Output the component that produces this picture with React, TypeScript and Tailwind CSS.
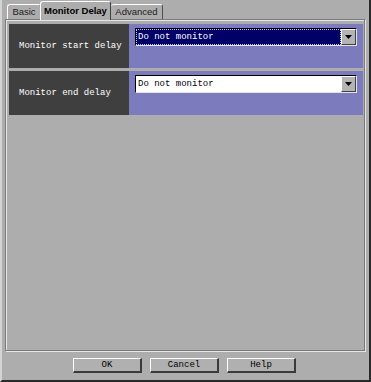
import React from "react";

const mono = { fontFamily: '"Liberation Mono", "DejaVu Sans Mono", monospace' };
const sans = { fontFamily: '"Liberation Sans", Arial, sans-serif' };

const Arrow = () => (
  <svg width="7" height="5" viewBox="0 0 7 5">
    <path d="M0 0 H7 L3.5 4 Z" fill="#000" />
  </svg>
);

const Select = ({ focused }: { focused?: boolean }) => {
  return (
    <div className="flex h-[18px] w-[222px] border-t border-l border-black border-b border-r border-b-[#e4e4e4] border-r-[#e4e4e4]">
      <div
        className={
          focused
            ? "flex flex-1 items-center bg-[#000066] text-white pl-[1px] border border-dotted border-[#c8c8ff]"
            : "flex flex-1 items-center bg-white text-black pl-[2px]"
        }
      >
        <span className="text-[9px] leading-none" style={mono}>
          Do not monitor
        </span>
      </div>
      <div className="flex w-[15px] items-center justify-center bg-[#b4b4b4] border-t border-l border-white border-b border-r border-b-[#404040] border-r-[#404040]">
        <Arrow />
      </div>
    </div>
  );
};

const Row = ({ label, focused }: { label: string; focused?: boolean }) => {
  return (
    <div className="flex h-[44px]">
      <div className="flex w-[120px] items-center bg-[#3f3f3f] pl-[10px] text-white">
        <span className="text-[9px] leading-none" style={mono}>
          {label}
        </span>
      </div>
      <div className="flex-1 bg-[#7b7bbd] pl-[6px] pt-[4px]">
        <Select focused={focused} />
      </div>
    </div>
  );
};

const Button = ({ children }: { children: React.ReactNode }) => (
  <div
    className="flex h-[15px] w-[69px] items-center justify-center bg-[#b0b0b0] border-t border-l border-white border-b-2 border-r-2 border-b-[#3a3a3a] border-r-[#3a3a3a] text-[9px] leading-none text-black"
    style={mono}
  >
    {children}
  </div>
);

export default function App() {
  return (
    <div className="flex h-[382px] w-[371px] flex-col bg-[#adadad] border-l-2 border-l-[#d4d4d4] border-r-2 border-r-[#2a2a2a] border-b-2 border-b-[#2a2a2a]">
      <div className="flex h-[19px] items-end pl-[5px]" style={sans}>
        <div className="flex h-[15px] w-[34px] items-center justify-center rounded-t-[3px] border-t border-l border-white border-r border-r-[#505050] text-[9.5px] text-[#202020]">
          Basic
        </div>
        <div className="relative z-10 -ml-[1px] -mb-[1px] flex h-[19px] w-[71px] items-start justify-center rounded-t-[3px] border-t border-l border-white border-r border-r-[#404040] bg-[#adadad] pt-[2px] text-[9.5px] font-bold text-black">
          Monitor Delay
        </div>
        <div className="flex h-[15px] w-[52px] items-center justify-center rounded-t-[3px] border-t border-white border-r border-r-[#505050] text-[9.5px] text-[#202020]">
          Advanced
        </div>
      </div>
      <div className="ml-[3px] flex h-[332px] w-[360px] flex-col gap-[3px] border border-[#7a7a7a] pl-[3px] pr-[1px] pt-[4px] shadow-[inset_1px_1px_0_#e6e6e6,1px_1px_0_#e6e6e6]">
        <Row label="Monitor start delay" focused />
        <Row label="Monitor end delay" />
      </div>
      <div className="mt-[7px] flex justify-center gap-[8px] pr-[2px]">
        <Button>OK</Button>
        <Button>Cancel</Button>
        <Button>Help</Button>
      </div>
    </div>
  );
}
